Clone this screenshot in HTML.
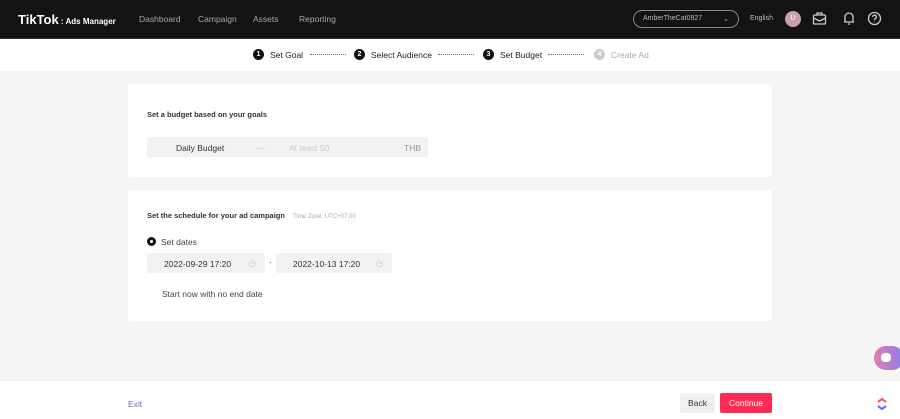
<!DOCTYPE html>
<html><head><style>
*{box-sizing:border-box;margin:0;padding:0}
body{width:900px;height:419px;overflow:hidden;background:#f5f5f6;font-family:"Liberation Sans",sans-serif;position:relative;color:#222}
.hdr{position:absolute;left:0;top:0;width:900px;height:39px;background:#131313;border-bottom:1px solid #333}
.hdr .t{position:absolute;color:#fff;font-size:8.5px}
.steps{position:absolute;top:39px;left:0;width:900px;height:32px;background:#fff}
.step{position:absolute;top:10px;font-size:8.5px;color:#222;display:flex;align-items:center}
.num{width:11px;height:11px;border-radius:50%;background:#111;color:#fff;font-size:7px;font-weight:bold;display:inline-flex;align-items:center;justify-content:center;margin-right:6px}
.dash{position:absolute;top:15px;width:36px;border-top:1px dotted #777}
.card{position:absolute;left:128px;width:644px;background:#fff;border-radius:3px}
.in{position:absolute;background:#f2f2f3;border-radius:2px;font-size:8.5px;color:#333}
.foot{position:absolute;left:0;top:381px;width:900px;height:38px;background:#fff}
</style></head><body>
<div class="hdr">
 <div class="t" style="left:18px;top:12px;font-size:13px;font-weight:bold">TikTok<span style="font-size:8px;font-weight:bold"> : Ads Manager</span></div>
 <div class="t" style="left:139px;top:14px;color:#aaa">Dashboard</div>
 <div class="t" style="left:198px;top:14px;color:#aaa">Campaign</div>
 <div class="t" style="left:253px;top:14px;color:#aaa">Assets</div>
 <div class="t" style="left:299px;top:14px;color:#aaa">Reporting</div>
 <div style="position:absolute;left:633px;top:10px;width:106px;height:18px;border:1px solid #888;border-radius:9px;color:#bbb;font-size:7px;padding:4px 9px">AmberTheCat0927 <span style="float:right">⌄</span></div>
 <div class="t" style="left:750px;top:15px;font-size:7px;color:#bbb">English</div>
 <div style="position:absolute;left:785px;top:11px;width:16px;height:16px;border-radius:50%;background:#c9a0ad;color:#fff;font-size:7px;text-align:center;line-height:16px">U</div>
 <svg style="position:absolute;left:812px;top:11px" width="15" height="15" viewBox="0 0 15 15" fill="none" stroke="#ccc" stroke-width="1.3"><rect x="1.5" y="4" width="12" height="9" rx="1"/><path d="M5 4V2h5v2M1.5 7l6 3 6-3"/></svg>
 <svg style="position:absolute;left:842px;top:11px" width="14" height="15" viewBox="0 0 14 15" fill="none" stroke="#ccc" stroke-width="1.3"><path d="M3 11V6a4 4 0 0 1 8 0v5H2h10M6 13h2"/></svg>
 <svg style="position:absolute;left:867px;top:11px" width="15" height="15" viewBox="0 0 15 15" fill="none" stroke="#ccc" stroke-width="1.3"><circle cx="7.5" cy="7.5" r="6"/><path d="M5.8 6a1.8 1.8 0 1 1 2.5 1.6c-.6.3-.8.7-.8 1.4M7.5 10.5v.6"/></svg>
</div>
<div class="steps">
 <div class="step" style="left:253px"><span class="num">1</span>Set Goal</div>
 <div class="dash" style="left:310px"></div>
 <div class="step" style="left:354px"><span class="num">2</span>Select Audience</div>
 <div class="dash" style="left:438px"></div>
 <div class="step" style="left:483px"><span class="num">3</span>Set Budget</div>
 <div class="dash" style="left:548px"></div>
 <div class="step" style="left:594px;color:#aaa"><span class="num" style="background:#ccc">4</span>Create Ad</div>
</div>
<div class="card" style="top:84px;height:93px">
 <div style="position:absolute;left:19px;top:26px;font-size:7.5px;font-weight:bold;color:#333">Set a budget based on your goals</div>
 <div class="in" style="left:19px;top:53px;width:281px;height:20px">
  <span style="position:absolute;left:29px;top:6px">Daily Budget</span>
  <span style="position:absolute;left:110px;top:6px;color:#ccc">—</span>
  <span style="position:absolute;left:142px;top:6px;color:#ccc">At least 50</span>
  <span style="position:absolute;right:7px;top:6px;color:#999">THB</span>
 </div>
</div>
<div class="card" style="top:190px;height:131px">
 <div style="position:absolute;left:19px;top:21px;font-size:7.5px;font-weight:bold;color:#333">Set the schedule for your ad campaign <span style="font-weight:normal;font-size:6px;color:#aaa;margin-left:6px">Time Zone: UTC+07:00</span></div>
 <div style="position:absolute;left:19px;top:47px;width:9px;height:9px;border-radius:50%;border:3px solid #111"></div>
 <div style="position:absolute;left:33px;top:47px;font-size:8.5px;color:#444">Set dates</div>
 <div class="in" style="left:19px;top:63px;width:118px;height:20px"><span style="position:absolute;left:17px;top:6px">2022-09-29 17:20</span><span style="position:absolute;right:9px;top:5px;color:#ccc">◷</span></div>
 <div style="position:absolute;left:141px;top:68px;font-size:8px;color:#666">-</div>
 <div class="in" style="left:148px;top:63px;width:116px;height:20px"><span style="position:absolute;left:17px;top:6px">2022-10-13 17:20</span><span style="position:absolute;right:9px;top:5px;color:#ccc">◷</span></div>
 <div style="position:absolute;left:34px;top:99px;font-size:8.5px;color:#444">Start now with no end date</div>
</div>
<div style="position:absolute;left:874px;top:346px;width:30px;height:24px;border-radius:12px;background:linear-gradient(90deg,#e27fb2,#8a7de8)"><div style="position:absolute;left:7px;top:7px;width:10px;height:9px;border-radius:4px;background:#fff"></div></div>
<div class="foot">
 <div style="position:absolute;left:128px;top:18px;font-size:8.5px;color:#7b5dd6">Exit</div>
 <div style="position:absolute;left:680px;top:12px;width:35px;height:20px;background:#f0f0f0;border-radius:2px;font-size:8.5px;text-align:center;line-height:20px;color:#333">Back</div>
 <div style="position:absolute;left:720px;top:12px;width:52px;height:20px;background:#fe2c55;border-radius:2px;font-size:8.5px;text-align:center;line-height:20px;color:#fff">Continue</div>
 <svg style="position:absolute;left:876px;top:16px" width="12" height="14" viewBox="0 0 12 14" fill="none" stroke-width="2.2"><path d="M2 5l4-3 4 3" stroke="#ff5a5f"/><path d="M2 9l4 3 4-3" stroke="#7b68ee"/></svg>
</div>
</body></html>
